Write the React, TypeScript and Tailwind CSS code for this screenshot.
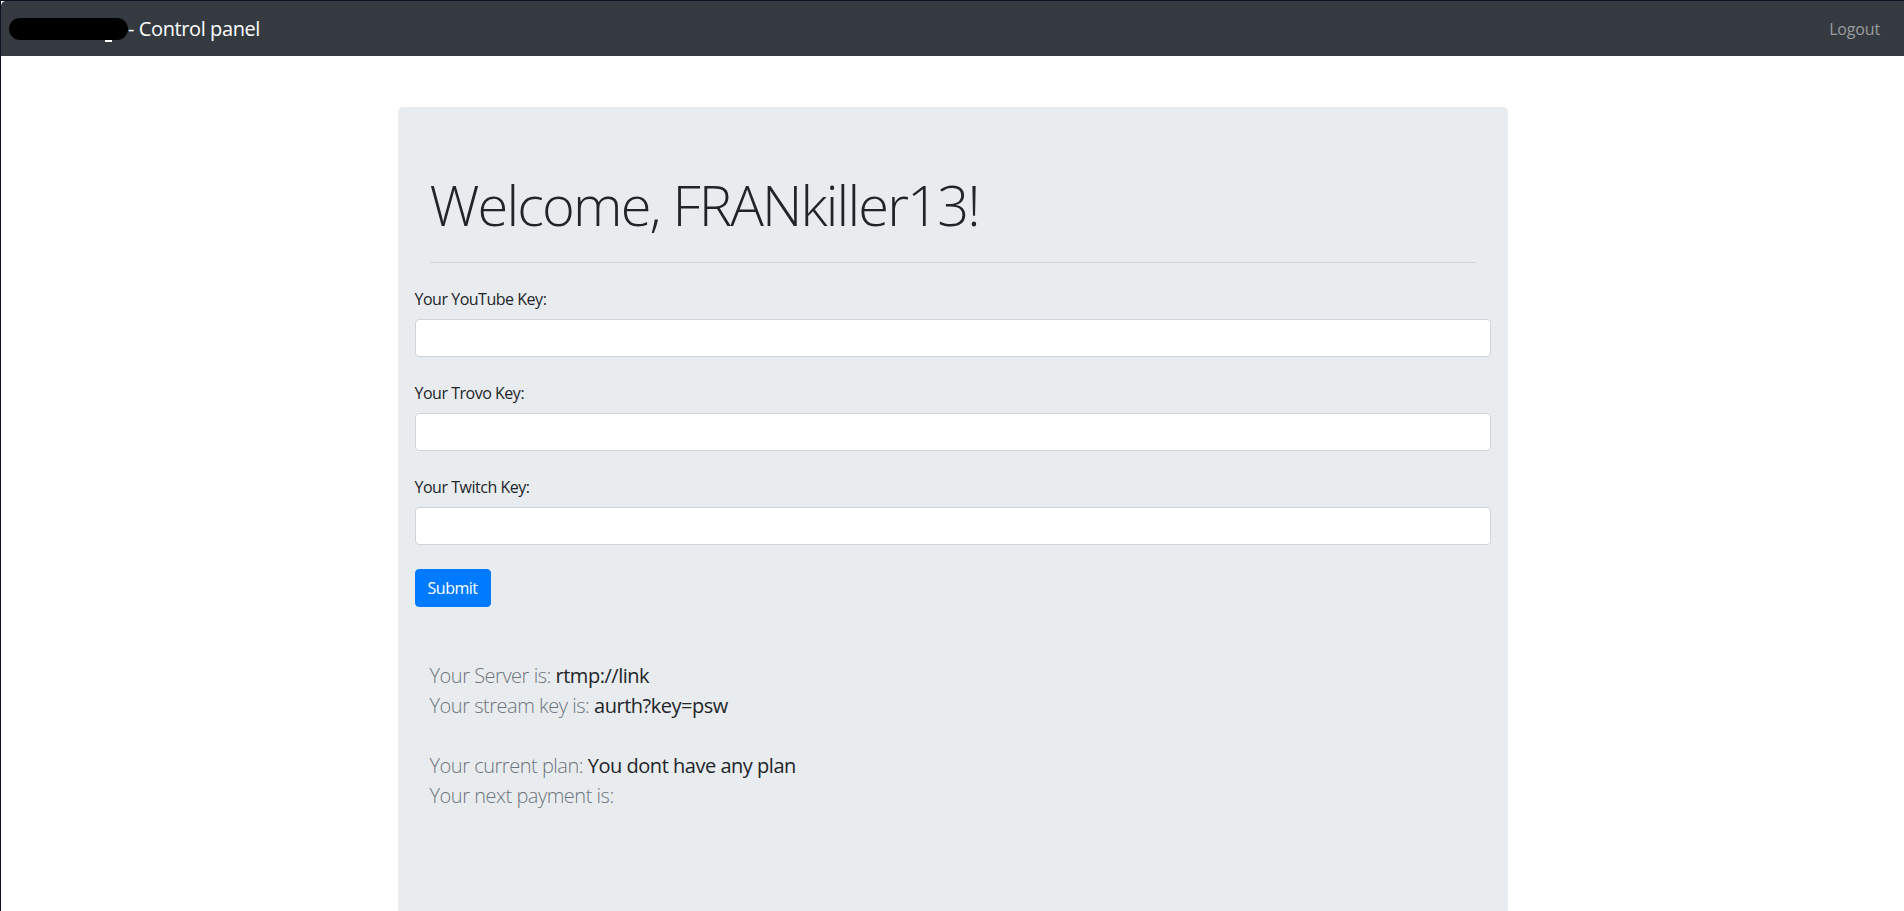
const font = "font-['Open_Sans','Noto_Sans',sans-serif]";

const fields = ["Your YouTube Key:", "Your Trovo Key:", "Your Twitch Key:"];

export default function App() {
  return (
    <div className={`min-h-screen border-l border-t border-[#0c1020] bg-white tracking-[-0.03em] ${font}`}>
      <nav className="flex h-[55px] items-center justify-between rounded-tl-[5px] bg-[#343a40] pl-2 pr-4">
        <a href="#" className="flex items-center text-xl tracking-[-0.02em] text-white">
          <span className="relative inline-block h-[22px] w-[119px] rounded-full bg-black">
            <span className="absolute left-[96px] top-[22px] h-[2px] w-[7px] bg-white" />
          </span>
          <span>- Control panel</span>
        </a>
        <a href="#" className="px-2 text-base tracking-[-0.01em] text-[#9a9da0]">Logout</a>
      </nav>

      <div className="mx-auto mt-[51px] w-[1110px]">
        <div className="rounded-t-[5px] bg-[#e9ecef] pb-28 pt-16">
          <div className="px-8">
            <h1 className="text-[56px] font-light leading-[1.2] tracking-[-0.033em] text-[#212529]">Welcome, FRANkiller13!</h1>
            <hr className="my-6 border-t border-black/10" />
          </div>

          <form className="px-[17px]" onSubmit={(e) => e.preventDefault()}>
            {fields.map((label) => (
              <div key={label} className="mb-6">
                <label className="mb-2 block text-base leading-6 text-[#212529]">{label}</label>
                <input
                  type="text"
                  className="block h-[38px] w-full rounded-[4px] border border-[#ced4da] bg-white px-3 text-base text-[#495057] outline-none"
                />
              </div>
            ))}
            <button
              type="submit"
              className="h-[38px] rounded-[4px] border border-[#007bff] bg-[#007bff] px-3 text-base leading-6 text-white"
            >
              Submit
            </button>
          </form>

          <div className="mt-[54px] px-8 text-xl leading-[30px]">
            <p className="font-light text-[#6c757d]">
              Your Server is: <span className="font-normal text-[#212529]">rtmp://link</span>
            </p>
            <p className="font-light text-[#6c757d]">
              Your stream key is: <span className="font-normal text-[#212529]">aurth?key=psw</span>
            </p>
            <p className="h-[30px]" />
            <p className="font-light text-[#6c757d]">
              Your current plan: <span className="font-normal text-[#212529]">You dont have any plan</span>
            </p>
            <p className="font-light text-[#6c757d]">Your next payment is:</p>
          </div>
        </div>
      </div>
    </div>
  );
}
